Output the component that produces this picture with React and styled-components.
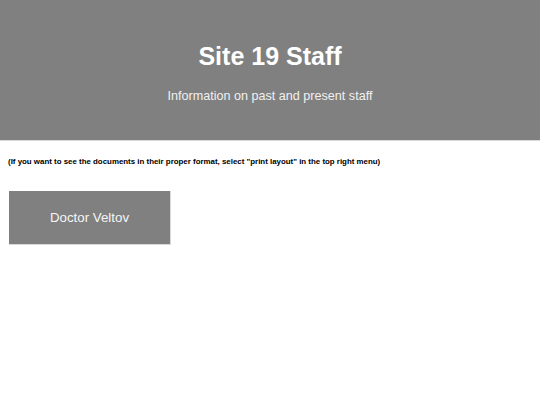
import React from "react";
import styled, { createGlobalStyle } from "styled-components";

const Global = createGlobalStyle`
  html, body { margin: 0; padding: 0; background: #ffffff; }
  body { font-family: "Liberation Sans", Arial, sans-serif; }
`;

const Page = styled.div`
  width: 540px;
  min-height: 405px;
  display: flex;
  flex-direction: column;
`;

const Header = styled.header`
  height: 141px;
  background: #808080;
  border-bottom: 1px solid #d9d9d9;
  display: flex;
  flex-direction: column;
  align-items: center;
  box-sizing: border-box;
  padding-top: 40px;
`;

const Title = styled.h1`
  margin: 0;
  font-size: 25px;
  line-height: 32px;
  font-weight: bold;
  color: #ffffff;
`;

const Subtitle = styled.p`
  margin: 0;
  margin-top: 16px;
  font-size: 12.6px;
  line-height: 16px;
  color: #f0f0f0;
`;

const Content = styled.main`
  padding: 15px 8px 0;
  display: flex;
  flex-direction: column;
  align-items: flex-start;
`;

const Note = styled.p`
  margin: 0;
  font-size: 7.9px;
  line-height: 12px;
  font-weight: bold;
  color: #000000;
`;

const Card = styled.div`
  margin-top: 23px;
  margin-left: 1px;
  width: 162px;
  height: 54px;
  background: #808080;
  border-right: 1px solid #d9d9d9;
  border-bottom: 1px solid #d9d9d9;
  box-sizing: border-box;
  display: flex;
  align-items: center;
  justify-content: center;
  font-size: 13.3px;
  color: #f5f5f5;
`;

export default function App() {
  return (
    <Page>
      <Global />
      <Header>
        <Title>Site 19 Staff</Title>
        <Subtitle>Information on past and present staff</Subtitle>
      </Header>
      <Content>
        <Note>
          (If you want to see the documents in their proper format, select "print layout" in the top right menu)
        </Note>
        <Card>Doctor Veltov</Card>
      </Content>
    </Page>
  );
}
